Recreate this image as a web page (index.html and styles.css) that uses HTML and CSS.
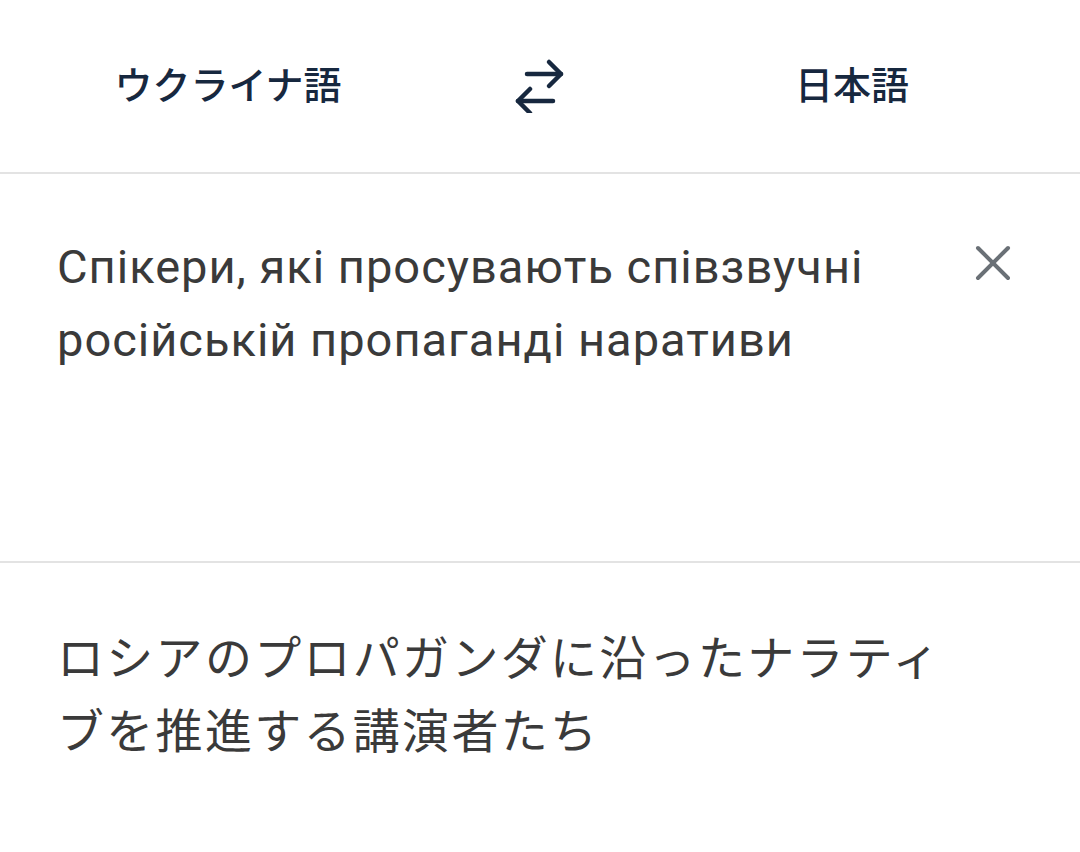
FILE: index.html
```html
<!DOCTYPE html>
<html lang="ja">
<head>
<meta charset="utf-8">
<title>翻訳</title>
<link rel="stylesheet" href="styles.css">
</head>
<body>
<div class="app">
  <header class="lang-bar">
    <div class="lang lang-src">ウクライナ語</div>
    <div class="swap">
      <svg width="56" height="56" viewBox="0 0 56 56" aria-hidden="true">
        <g fill="none" stroke="#17283f" stroke-width="4.5" stroke-linecap="round" stroke-linejoin="round">
          <path d="M15 17 H49"/>
          <path d="M37 5 L49 17 L37 29"/>
          <path d="M41 44 H6"/>
          <path d="M18 32 L6 44 L18 56"/>
        </g>
      </svg>
    </div>
    <div class="lang lang-dst">日本語</div>
  </header>
  <section class="source">
    <p class="source-text">Спікери, які просувають співзвучні російській пропаганді наративи</p>
    <button class="clear" aria-label="clear">
      <svg width="36" height="36" viewBox="0 0 36 36" aria-hidden="true">
        <g stroke="#6a7076" stroke-width="4" stroke-linecap="round">
          <path d="M3 3 L33 33"/>
          <path d="M33 3 L3 33"/>
        </g>
      </svg>
    </button>
  </section>
  <section class="target">
    <p class="target-text">ロシアのプロパガンダに沿ったナラティブを推進する講演者たち</p>
  </section>
</div>
</body>
</html>
```
FILE: styles.css
```css
html, body {
  margin: 0;
  padding: 0;
  background: #ffffff;
}
.app {
  width: 1080px;
  height: 852px;
  overflow: hidden;
}
.lang-bar {
  display: grid;
  grid-template-columns: 1fr 168px 1fr;
  align-items: center;
  height: 172px;
  border-bottom: 2px solid #e3e3e3;
}
.lang {
  text-align: center;
  font-family: "Noto Sans CJK JP", sans-serif;
  font-weight: 500;
  font-size: 38px;
  color: #17283f;
  line-height: 1;
  padding-bottom: 6px;
}
.swap {
  display: flex;
  justify-content: center;
  align-items: center;
  padding-bottom: 2px;
}
.source {
  display: flex;
  align-items: flex-start;
  height: 389px;
  box-sizing: border-box;
  padding: 56px 69px 0 57px;
  border-bottom: 2px solid #e3e3e3;
}
.source-text {
  flex: 1;
  margin: 0;
  font-family: Roboto, "Noto Sans CJK JP", sans-serif;
  font-size: 47px;
  letter-spacing: 1px;
  line-height: 73px;
  color: #3a3a3a;
  padding-right: 60px;
}
.clear {
  border: 0;
  background: none;
  padding: 0;
  margin-top: 15px;
  width: 36px;
  height: 36px;
  display: flex;
}
.target {
  padding: 55px 110px 0 57px;
}
.target-text {
  margin: 0;
  font-family: "Noto Sans CJK JP", sans-serif;
  font-size: 47px;
  letter-spacing: 2.3px;
  line-height: 73px;
  color: #3a3a3a;
}
```
